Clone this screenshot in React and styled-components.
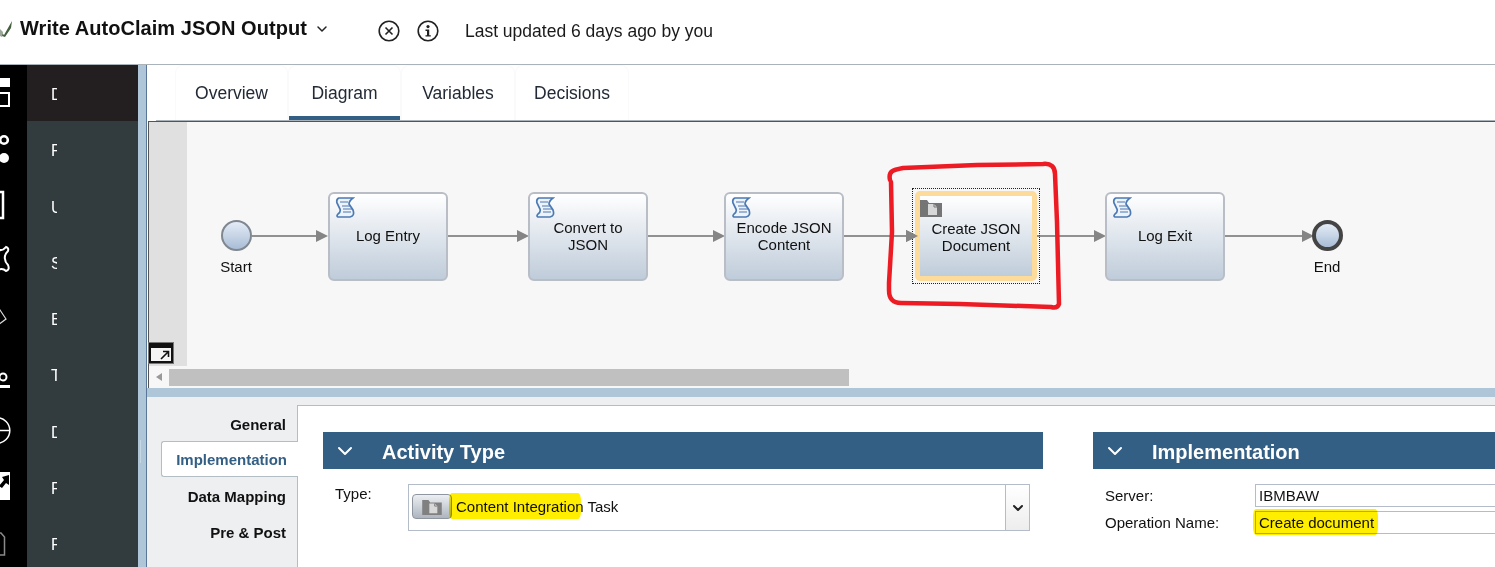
import React from "react";
import styled, { createGlobalStyle } from "styled-components";
import { ChevronDown } from "lucide-react";

const GlobalStyle = createGlobalStyle`
	html, body {
		margin: 0;
		padding: 0;
		background: #fff;
		font-family: "Liberation Sans", Arial, sans-serif;
		color: #111;
		overflow: hidden;
	}
	* { box-sizing: border-box; }
`;

const Page = styled.div`
	width: 1495px;
	height: 567px;
	display: flex;
	flex-direction: column;
	overflow: hidden;
`;

const Header = styled.header`
	height: 65px;
	flex: none;
	display: flex;
	align-items: center;
	padding-bottom: 7px;
	border-bottom: 1px solid #a9b3b9;
`;

const Logo = styled.svg`
	width: 14px;
	height: 20px;
	margin-right: 6px;
	margin-top: 2px;
`;

const Title = styled.h1`
	margin: 0;
	font-size: 20px;
	letter-spacing: 0.05px;
	font-weight: 700;
	color: #111;
`;

const TitleChevron = styled(ChevronDown)`
	width: 16px;
	height: 16px;
	margin-left: 7px;
	margin-right: 48px;
	color: #222;
`;

const RoundIcon = styled.svg`
	width: 22px;
	height: 22px;
	margin-right: 17px;
	margin-top: 4px;
`;

const Updated = styled.span`
	font-size: 17.5px;
	margin-left: 9px;
	margin-top: 5px;
	color: #1a1a1a;
`;

const Body = styled.div`
	flex: 1;
	display: flex;
	min-height: 0;
`;

const Rail = styled.nav`
	width: 27px;
	flex: none;
	background: #000;
	display: flex;
	flex-direction: column;
`;

const RailIcon = styled.svg`
	width: 27px;
	height: 56.25px;
	flex: none;
`;

const NavPanel = styled.div`
	width: 111px;
	flex: none;
	background: #323c3e;
	display: flex;
	flex-direction: column;
`;

const NavItem = styled.div`
	height: 56.25px;
	flex: none;
	display: flex;
	align-items: center;
	padding-left: 24px;
	background: ${(p) => (p.$active ? "#231f20" : "transparent")};
`;

const NavLetter = styled.span`
	width: 6px;
	overflow: hidden;
	font-size: 16px;
	line-height: 18px;
	color: #fff;
	margin-top: 4px;
`;

const Splitter = styled.div`
	width: 9px;
	flex: none;
	position: relative;
	background: #afc6d8;
	border-right: 1px solid #5a7698;
`;

const SplitHandle = styled.span`
	position: absolute;
	left: 2px;
	top: 375px;
	width: 1px;
	height: 23px;
	background: #c6d7e4;
`;

const Main = styled.main`
	flex: 1;
	min-width: 0;
	display: flex;
	flex-direction: column;
`;

const TabBar = styled.div`
	height: 56px;
	flex: none;
	display: flex;
	padding-left: 19px;
	margin-left: 9px;
	border-bottom: 1px solid #a9b3b9;
`;

const Tab = styled.div`
	width: ${(p) => p.$w}px;
	height: 55px;
	display: flex;
	align-items: center;
	justify-content: center;
	padding-top: 1px;
	font-size: 17.5px;
	color: #222a35;
	border: 1px solid #fafafa;
	border-bottom: none;
	border-radius: 8px 8px 0 0;
	box-shadow: ${(p) => (p.$active ? "inset 0 -4px 0 #345f85" : "none")};
`;

const Diagram = styled.section`
	height: 267px;
	flex: none;
	margin-left: 1px;
	display: grid;
	grid-template-columns: 38px 1fr;
	grid-template-rows: 1fr 22px;
	border-top: 1px solid #555;
	border-left: 1px solid #555;
	background: #f7f7f7;
`;

const Gutter = styled.div`
	position: relative;
	background: #e0e0e0;
`;

const ExpandButton = styled.div`
	position: absolute;
	left: 0;
	bottom: 3px;
	width: 24px;
	height: 20px;
	background: #f4f4f4;
	border: 2px solid #111;
	border-top-width: 5px;
	outline: 1px solid #777;
	display: flex;
	align-items: center;
	justify-content: flex-end;
`;

const ExpandGlyph = styled.svg`
	width: 10px;
	height: 10px;
	margin-right: 1px;
`;

const Canvas = styled.div`
	position: relative;
	overflow: hidden;
	background: #f7f7f7;
`;

const Overlay = styled.svg`
	position: absolute;
	left: 0;
	top: 0;
	width: 100%;
	height: 100%;
	pointer-events: none;
`;

const Activity = styled.div`
	position: absolute;
	left: ${(p) => p.$x - 187}px;
	top: 70px;
	width: 120px;
	height: 89px;
	display: flex;
	align-items: center;
	justify-content: center;
	text-align: center;
	padding-bottom: 2px;
	font-size: 15px;
	line-height: 17px;
	color: #111;
	border: 2px solid #b8bdc6;
	border-radius: 6px;
	background: linear-gradient(#ffffff, #bfccda);
`;

const Selection = styled.div`
	position: absolute;
	left: ${912 - 187}px;
	top: ${188 - 122}px;
	width: 128px;
	height: 96px;
	padding: 2px;
	border: 1px dotted #222;
`;

const SelectedActivity = styled.div`
	width: 100%;
	height: 100%;
	display: flex;
	align-items: center;
	justify-content: center;
	text-align: center;
	padding-top: 2px;
	font-size: 15px;
	line-height: 17px;
	color: #111;
	border: 5px solid #fddb9a;
	border-radius: 5px;
	background: linear-gradient(#ffffff, #bfccda);
`;

const ScrollIcon = styled.svg`
	position: absolute;
	left: 5px;
	top: 2px;
	width: 20px;
	height: 23px;
`;

const FolderBadge = styled.svg`
	position: absolute;
	left: 7px;
	top: 10px;
	width: 22px;
	height: 18px;
`;

const EventCircle = styled.div`
	position: absolute;
	left: ${(p) => p.$x - 187 - 15}px;
	top: ${236 - 122 - 16}px;
	width: 31px;
	height: 31px;
	border-radius: 50%;
	border: ${(p) => (p.$end ? "4px solid #444" : "2px solid #7f8790")};
	background: linear-gradient(#e4ecf6, #a9bdd6);
`;

const EventLabel = styled.span`
	position: absolute;
	left: ${(p) => p.$x - 187 - 30}px;
	top: ${258 - 122}px;
	width: 60px;
	text-align: center;
	font-size: 15px;
	line-height: 18px;
	color: #111;
`;

const ScrollBar = styled.div`
	grid-column: 1 / 3;
	display: flex;
	align-items: center;
	background: #f7f7f7;
`;

const ScrollArrow = styled.span`
	width: 20px;
	flex: none;
	display: flex;
	justify-content: center;
	&::before {
		content: "";
		border: 4px solid transparent;
		border-left: none;
		border-right: 6px solid #999;
	}
`;

const ScrollThumb = styled.div`
	width: 680px;
	height: 17px;
	background: #c0c0c0;
`;

const PaneDivider = styled.div`
	height: 9px;
	flex: none;
	background: #afc6d8;
`;

const LowerPane = styled.div`
	flex: 1;
	min-height: 0;
	display: flex;
	padding-top: 8px;
	background: #eeeff1;
`;

const SideTabs = styled.div`
	width: 150px;
	flex: none;
	display: flex;
	flex-direction: column;
	padding-left: 14px;
`;

const SideTab = styled.div`
	height: 36px;
	display: flex;
	align-items: center;
	justify-content: flex-end;
	padding-right: 11px;
	padding-top: ${(p) => (p.$active ? "1px" : "2px")};
	font-size: 15px;
	font-weight: 700;
	color: ${(p) => (p.$active ? "#345f85" : "#111")};
	background: ${(p) => (p.$active ? "#fff" : "transparent")};
	border: ${(p) => (p.$active ? "1px solid #b3bdc4" : "none")};
	border-right: none;
	border-radius: ${(p) => (p.$active ? "3px 0 0 3px" : "0")};
	margin-right: ${(p) => (p.$active ? "-1px" : "0")};
	position: relative;
	z-index: 1;
`;

const SheetBody = styled.div`
	flex: 1;
	min-width: 0;
	background: #fff;
	border-top: 1px solid #b3bdc4;
	border-left: 1px solid #b3bdc4;
	padding: 26px 0 0 25px;
	display: flex;
	gap: 50px;
`;

const Section = styled.section`
	flex: none;
	width: ${(p) => p.$w}px;
`;

const SectionHead = styled.div`
	height: 37px;
	display: flex;
	align-items: center;
	padding-left: 10px;
	background: #345f85;
	color: #fff;
	font-size: 20px;
	font-weight: 700;
	line-height: 24px;
`;

const SectionTitle = styled.span`
	margin-top: 3px;
`;

const SectionChevron = styled(ChevronDown)`
	width: 24px;
	height: 24px;
	margin-right: 25px;
	color: #fff;
`;

const TypeRow = styled.div`
	display: flex;
	margin-top: 15px;
	padding-left: 12px;
`;

const FieldLabel = styled.span`
	width: ${(p) => p.$w}px;
	flex: none;
	font-size: 15px;
	line-height: 20px;
	color: #111;
`;

const TypeSelect = styled.div`
	position: relative;
	width: 622px;
	height: 47px;
	display: flex;
	align-items: center;
	padding-left: 3px;
	padding-bottom: 2px;
	border: 1px solid #b5bcc9;
	font-size: 15px;
	color: #111;
`;

const TypeButton = styled.div`
	width: 40px;
	height: 25px;
	margin-right: 4px;
	display: flex;
	align-items: center;
	justify-content: center;
	border: 1px solid #8f96a0;
	border-radius: 4px;
	background: linear-gradient(#eceff3, #aeb5bf);
`;

const TypeGlyph = styled.svg`
	width: 20px;
	height: 16px;
`;

const DropButton = styled.div`
	position: absolute;
	right: 0;
	top: 0;
	bottom: 0;
	width: 24px;
	display: flex;
	align-items: center;
	justify-content: center;
	border-left: 1px solid #b5bcc9;
	background: linear-gradient(#fff, #ededed);
`;

const DropChevron = styled(ChevronDown)`
	width: 16px;
	height: 16px;
	stroke-width: 3;
	color: #222;
`;

const Marker = styled.span`
	position: absolute;
	left: ${(p) => p.$x}px;
	top: ${(p) => p.$y}px;
	width: ${(p) => p.$w}px;
	height: ${(p) => p.$h}px;
	background: #ffee00;
	border-radius: 3px / 8px;
	mix-blend-mode: multiply;
	pointer-events: none;
`;

const FieldGrid = styled.div`
	display: flex;
	flex-direction: column;
	gap: 4px;
	margin-top: 15px;
	padding-left: 12px;
`;

const FieldRow = styled.div`
	display: flex;
	align-items: center;
`;

const TextBox = styled.div`
	position: relative;
	flex: 1;
	height: 23px;
	display: flex;
	align-items: center;
	padding-left: 3px;
	border: 1px solid #b5bcc9;
	border-right: none;
	font-size: 15px;
	color: #111;
`;

const navLetters = ["D", "P", "U", "S", "E", "T", "D", "R", "F"];

const railIcons = [
	<>
		<rect x="-4" y="13" width="14" height="9" fill="#fff" />
		<rect x="-4" y="28" width="13" height="13" fill="none" stroke="#fff" strokeWidth="2" />
	</>,
	<>
		<circle cx="4" cy="19" r="3.8" fill="none" stroke="#fff" strokeWidth="2.6" />
		<circle cx="4" cy="37" r="5" fill="#fff" />
	</>,
	<rect x="-6" y="14" width="9" height="26" fill="none" stroke="#fff" strokeWidth="2.5" />,
	<path
		d="M-4 15 Q2 18 6 13 Q9 14 8 17 Q4 21 5 25 Q5 28 8 31 Q10 36 6 37 Q2 33 -4 37"
		fill="none"
		stroke="#fff"
		strokeWidth="2"
	/>,
	<path d="M-2 17 L6 29 L-2 35" fill="none" stroke="#ddd" strokeWidth="1.2" />,
	<>
		<circle cx="-1" cy="17" r="1" fill="#999" />
		<circle cx="3" cy="31" r="3.5" fill="none" stroke="#fff" strokeWidth="2" />
		<rect x="-3" y="39" width="13" height="3" fill="#fff" />
	</>,
	<>
		<circle cx="-3" cy="27.5" r="12.8" fill="none" stroke="#fff" strokeWidth="1.5" />
		<line x1="-10" y1="27.5" x2="10" y2="27.5" stroke="#fff" strokeWidth="1.5" />
	</>,
	<>
		<rect x="-3" y="13" width="13" height="28" fill="#fff" />
		<path d="M9 16 L2 18 L4 21 L-1 27 L2 29 L6 24 L9 26 Z" fill="#000" />
	</>,
	<path
		d="M-3 18 L1 18 L4.5 22 L4.5 40 L-3 40"
		fill="none"
		stroke="#8a8a8a"
		strokeWidth="1.5"
	/>,
];

const edges = [
	[252, 316],
	[447, 517],
	[647, 713],
	[843, 906],
	[1037, 1094],
	[1224, 1302],
];

const Edge = ({ from, to }) => {
	const x1 = from - 187;
	const x2 = to - 187;
	return (
		<>
			<line x1={x1} y1="114" x2={x2} y2="114" stroke="#919191" strokeWidth="2" />
			<polygon points={`${x2},108 ${x2 + 12},114 ${x2},120`} fill="#858585" />
		</>
	);
};

const ScriptGlyph = () => (
	<ScrollIcon viewBox="0 0 20 23">
		<path
			d="M4 2 L18 2 Q14 5 14 8 L18 14 Q20 20 15 21 L3 21 Q1 20 3 18 Q6 16 5 13 L2 7 Q1 3 4 2 Z"
			fill="#eef3f9"
			stroke="#4a79b4"
			strokeWidth="1.7"
		/>
		<path d="M5 6 H13 M7 10 H15 M8 13 H17 M8 16 H16" stroke="#4a79b4" strokeWidth="1.1" />
	</ScrollIcon>
);

const FolderDoc = ({ dark }) => (
	<>
		<path d="M0 1 H7 L9 4 H22 V18 H0 Z" fill={dark ? "#757575" : "#808080"} />
		<path d="M8 5 H14 L17 8 V16 H8 Z" fill="#d8d8d8" />
		<path d="M14 5 V8 H17" fill="none" stroke="#777" strokeWidth="1" />
	</>
);

const App = () => {
	return (
		<Page>
			<GlobalStyle />
			<Header>
				<Logo viewBox="0 0 14 20">
					<path d="M1 12 L4 15 L12 1 L11 8 L5 17 L2 16 Z" fill="#44603f" />
					<path d="M0 9 L3 12 L2 17 L0 16 Z" fill="#9aa898" />
				</Logo>
				<Title>Write AutoClaim JSON Output</Title>
				<TitleChevron strokeWidth={2.2} />
				<RoundIcon viewBox="0 0 22 22">
					<circle cx="11" cy="11" r="9.8" fill="none" stroke="#222" strokeWidth="1.6" />
					<path d="M7.5 7.5 L14.5 14.5 M14.5 7.5 L7.5 14.5" stroke="#222" strokeWidth="1.6" />
				</RoundIcon>
				<RoundIcon viewBox="0 0 22 22">
					<circle cx="11" cy="11" r="9.8" fill="none" stroke="#222" strokeWidth="1.6" />
					<circle cx="11" cy="6.6" r="1.6" fill="#222" />
					<path d="M8.5 9.6 H12.2 V15.2 H13.8 V16.6 H8.5 V15.2 H10 V11 H8.5 Z" fill="#222" />
				</RoundIcon>
				<Updated>Last updated 6 days ago by you</Updated>
			</Header>
			<Body>
				<Rail>
					{railIcons.map((icon, index) => (
						<RailIcon key={index} viewBox="0 0 27 56.25">
							{icon}
						</RailIcon>
					))}
				</Rail>
				<NavPanel>
					{navLetters.map((letter, index) => (
						<NavItem key={index} $active={index === 0}>
							<NavLetter>{letter}</NavLetter>
						</NavItem>
					))}
				</NavPanel>
				<Splitter>
					<SplitHandle />
				</Splitter>
				<Main>
					<TabBar>
						<Tab $w={113}>Overview</Tab>
						<Tab $w={113} $active>
							Diagram
						</Tab>
						<Tab $w={114}>Variables</Tab>
						<Tab $w={114}>Decisions</Tab>
					</TabBar>
					<Diagram>
						<Gutter>
							<ExpandButton>
								<ExpandGlyph viewBox="0 0 10 10">
									<path d="M1 9 L8 2 M3 1.5 H8.5 V7" fill="none" stroke="#111" strokeWidth="1.6" />
								</ExpandGlyph>
							</ExpandButton>
						</Gutter>
						<Canvas>
							<Overlay>
								{edges.map(([from, to]) => (
									<Edge key={from} from={from} to={to} />
								))}
							</Overlay>
							<EventCircle $x={236} />
							<EventLabel $x={236}>Start</EventLabel>
							<Activity $x={328}>
								<ScriptGlyph />
								Log Entry
							</Activity>
							<Activity $x={528}>
								<ScriptGlyph />
								Convert to
								<br />
								JSON
							</Activity>
							<Activity $x={724}>
								<ScriptGlyph />
								Encode JSON
								<br />
								Content
							</Activity>
							<Selection>
								<SelectedActivity>
									<FolderBadge viewBox="0 0 22 18">
										<FolderDoc dark />
									</FolderBadge>
									Create JSON
									<br />
									Document
								</SelectedActivity>
							</Selection>
							<Activity $x={1105}>
								<ScriptGlyph />
								Log Exit
							</Activity>
							<EventCircle $x={1327} $end />
							<EventLabel $x={1327}>End</EventLabel>
							<Overlay>
								<polygon points={`${906 - 187},108 ${918 - 187},114 ${906 - 187},120`} fill="#858585" />
								<path
									d="M703 58 C701 49 706 48 716 46 L790 43 L856 42 C864 41 868 45 868 52 L870 100 L872 182 C871 185 868 186 864 185 L773 182 L714 181 C705 181 702 176 702 168 L702 161 L705 110 L704 60"
									fill="none"
									stroke="#ed1c24"
									strokeWidth="4.5"
									strokeLinejoin="round"
									strokeLinecap="round"
								/>
							</Overlay>
						</Canvas>
						<ScrollBar>
							<ScrollArrow />
							<ScrollThumb />
						</ScrollBar>
					</Diagram>
					<PaneDivider />
					<LowerPane>
						<SideTabs>
							<SideTab>General</SideTab>
							<SideTab $active>Implementation</SideTab>
							<SideTab>Data Mapping</SideTab>
							<SideTab>Pre &amp; Post</SideTab>
						</SideTabs>
						<SheetBody>
							<Section $w={720}>
								<SectionHead>
									<SectionChevron />
									<SectionTitle>Activity Type</SectionTitle>
								</SectionHead>
								<TypeRow>
									<FieldLabel $w={73}>Type:</FieldLabel>
									<TypeSelect>
										<TypeButton>
											<TypeGlyph viewBox="0 0 22 18">
												<FolderDoc />
											</TypeGlyph>
										</TypeButton>
										Content Integration Task
										<DropButton>
											<DropChevron />
										</DropButton>
										<Marker $x={40} $y={8} $w={132} $h={26} />
									</TypeSelect>
								</TypeRow>
							</Section>
							<Section $w={420}>
								<SectionHead>
									<SectionChevron />
									<SectionTitle>Implementation</SectionTitle>
								</SectionHead>
								<FieldGrid>
									<FieldRow>
										<FieldLabel $w={150}>Server:</FieldLabel>
										<TextBox>IBMBAW</TextBox>
									</FieldRow>
									<FieldRow>
										<FieldLabel $w={150}>Operation Name:</FieldLabel>
										<TextBox>
											Create document
											<Marker $x={-3} $y={-3} $w={125} $h={26} />
										</TextBox>
									</FieldRow>
								</FieldGrid>
							</Section>
						</SheetBody>
					</LowerPane>
				</Main>
			</Body>
		</Page>
	);
};

export default App;
